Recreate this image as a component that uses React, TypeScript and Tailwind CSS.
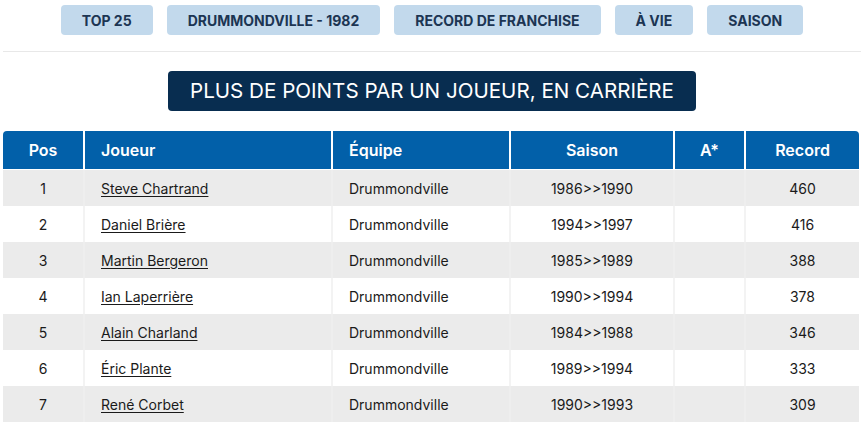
import React from 'react'

const TABS = ['TOP 25', 'DRUMMONDVILLE - 1982', 'RECORD DE FRANCHISE', 'À VIE', 'SAISON']

const ROWS = [
  { pos: 1, joueur: 'Steve Chartrand', equipe: 'Drummondville', saison: '1986>>1990', record: 460 },
  { pos: 2, joueur: 'Daniel Brière', equipe: 'Drummondville', saison: '1994>>1997', record: 416 },
  { pos: 3, joueur: 'Martin Bergeron', equipe: 'Drummondville', saison: '1985>>1989', record: 388 },
  { pos: 4, joueur: 'Ian Laperrière', equipe: 'Drummondville', saison: '1990>>1994', record: 378 },
  { pos: 5, joueur: 'Alain Charland', equipe: 'Drummondville', saison: '1984>>1988', record: 346 },
  { pos: 6, joueur: 'Éric Plante', equipe: 'Drummondville', saison: '1989>>1994', record: 333 },
  { pos: 7, joueur: 'René Corbet', equipe: 'Drummondville', saison: '1990>>1993', record: 309 },
]

const cols = 'grid grid-cols-[80px_246px_176px_162px_69px_113px] gap-x-[2px]'

export default function App() {
  return (
    <div className="w-[864px] h-[425px] overflow-hidden bg-white font-['Inter',sans-serif]">
      <div className="flex justify-center gap-[14px] pt-[5px]">
        {TABS.map(t => (
          <div
            key={t}
            className="h-[30px] px-[21px] flex items-center rounded-[4px] bg-[#c2d9ec] text-[#1c3553] text-[14px] font-bold"
          >
            {t}
          </div>
        ))}
      </div>

      <div className="mx-[3px] mt-[16px] border-t border-[#e8e8e8]" />

      <div className="flex justify-center mt-[19px]">
        <div className="w-[528px] h-[40px] flex items-center justify-center rounded-[4px] bg-[#082d50] text-white text-[20.6px] font-normal">
          PLUS DE POINTS PAR UN JOUEUR, EN CARRIÈRE
        </div>
      </div>

      <div className="mx-[3px] mt-[20px] w-[856px]">
        <div className={`${cols} h-[38px] text-white text-[16px] font-semibold`}>
          <div className="bg-[#0260a9] rounded-tl-[4px] flex items-center justify-center">Pos</div>
          <div className="bg-[#0260a9] flex items-center pl-[16px]">Joueur</div>
          <div className="bg-[#0260a9] flex items-center pl-[16px]">Équipe</div>
          <div className="bg-[#0260a9] flex items-center justify-center">Saison</div>
          <div className="bg-[#0260a9] flex items-center justify-center">A*</div>
          <div className="bg-[#0260a9] rounded-tr-[4px] flex items-center justify-center">Record</div>
        </div>

        <div className="mt-[1px]">
          {ROWS.map((r, i) => {
            const bg = i % 2 === 0 ? 'bg-[#ebebeb]' : 'bg-white'
            const line = i % 2 === 0 ? 'bg-[#eeeeee]' : 'bg-[#f3f3f3]'
            return (
              <div key={r.pos} className={`${cols} h-[36px] text-[14px] text-[#1a1a1a] ${line}`}>
                <div className={`${bg} flex items-center justify-center`}>{r.pos}</div>
                <div className={`${bg} flex items-center pl-[16px]`}>
                  <a href="#" className="underline underline-offset-2 text-[#1a1a1a]">{r.joueur}</a>
                </div>
                <div className={`${bg} flex items-center pl-[16px]`}>{r.equipe}</div>
                <div className={`${bg} flex items-center justify-center`}>{r.saison}</div>
                <div className={bg} />
                <div className={`${bg} flex items-center justify-center`}>{r.record}</div>
              </div>
            )
          })}
        </div>
      </div>
    </div>
  )
}
